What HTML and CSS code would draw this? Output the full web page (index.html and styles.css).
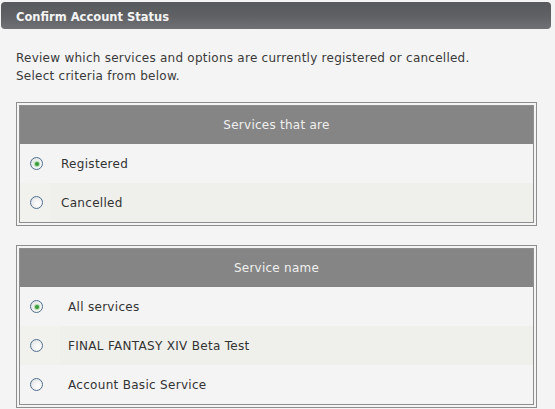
FILE: index.html
```html
<!DOCTYPE html>
<html>
<head>
<meta charset="utf-8">
<link rel="stylesheet" href="styles.css">
</head>
<body>
<div class="titlebar"><h1 class="title">Confirm Account Status</h1></div>
<p class="intro">Review which services and options are currently registered or cancelled.<br>Select criteria from below.</p>

<div class="box box-status">
  <div class="inner">
    <div class="head">Services that are</div>
    <div class="row">
      <div class="rcell"><span class="radio checked"></span></div>
      <div class="tcell">Registered</div>
    </div>
    <div class="row alt">
      <div class="rcell"><span class="radio"></span></div>
      <div class="tcell">Cancelled</div>
    </div>
  </div>
</div>

<div class="box box-name">
  <div class="inner">
    <div class="head">Service name</div>
    <div class="row">
      <div class="rcell"><span class="radio checked"></span></div>
      <div class="tcell">All services</div>
    </div>
    <div class="row alt">
      <div class="rcell"><span class="radio"></span></div>
      <div class="tcell">FINAL FANTASY XIV Beta Test</div>
    </div>
    <div class="row">
      <div class="rcell"><span class="radio"></span></div>
      <div class="tcell">Account Basic Service</div>
    </div>
  </div>
</div>
</body>
</html>
```
FILE: styles.css
```css
html, body {
  margin: 0;
  padding: 0;
  background: #f4f4f4;
}
body {
  font-family: "DejaVu Sans", Verdana, sans-serif;
  font-size: 12px;
  color: #333333;
}
.titlebar {
  margin: 2px 4px 0 1px;
  height: 27px;
  border-radius: 4px;
  background: linear-gradient(to bottom, #58595d 0%, #5f6064 50%, #707175 100%);
  display: flex;
  align-items: center;
  padding-left: 15px;
}
.title {
  margin: 0;
  font-size: 11.5px;
  font-weight: bold;
  color: #f4f4f4;
  position: relative;
  top: 1px;
}
.intro {
  margin: 20px 0 17px 16px;
  line-height: 18px;
  font-size: 12px;
  letter-spacing: 0.25px;
  color: #3a3a3a;
}
.box {
  margin-left: 16px;
  border: 1px solid #8e8e8e;
  padding: 2px;
  box-sizing: border-box;
  width: 521px;
}
.box-status { margin-bottom: 19px; }
.inner {
  border: 1px solid #8e8e8e;
}
.head {
  height: 38px;
  background: #858585;
  color: #f0f0f0;
  font-size: 12px;
  letter-spacing: 0.25px;
  display: flex;
  align-items: center;
  justify-content: center;
}
.row {
  display: grid;
  height: 39px;
  align-items: stretch;
  background: #f4f4f4;
}
.box-status .row { grid-template-columns: 30px 1fr; }
.box-name .row { grid-template-columns: 40px 1fr; }
.row.alt { background: #efefeb; }
.row.alt .rcell { background: #f1f1ee; }
.rcell {
  display: flex;
  align-items: center;
  padding-left: 10px;
}
.tcell {
  display: flex;
  align-items: center;
  padding-left: 11px;
  font-size: 12px;
  letter-spacing: 0.3px;
  color: #333333;
}
.box-name .tcell { padding-left: 8px; }
.radio {
  width: 11px;
  height: 11px;
  border-radius: 50%;
  border: 1px solid #50708f;
  background: radial-gradient(circle at 65% 65%, #ffffff 0%, #f2f2f2 45%, #d5d8dc 100%);
  display: flex;
  align-items: center;
  justify-content: center;
}
.radio.checked::after {
  content: "";
  width: 4px;
  height: 4px;
  border-radius: 50%;
  background: #3b9a3b;
  box-shadow: 0 0 1px 1px #a6d9a6;
}
```
